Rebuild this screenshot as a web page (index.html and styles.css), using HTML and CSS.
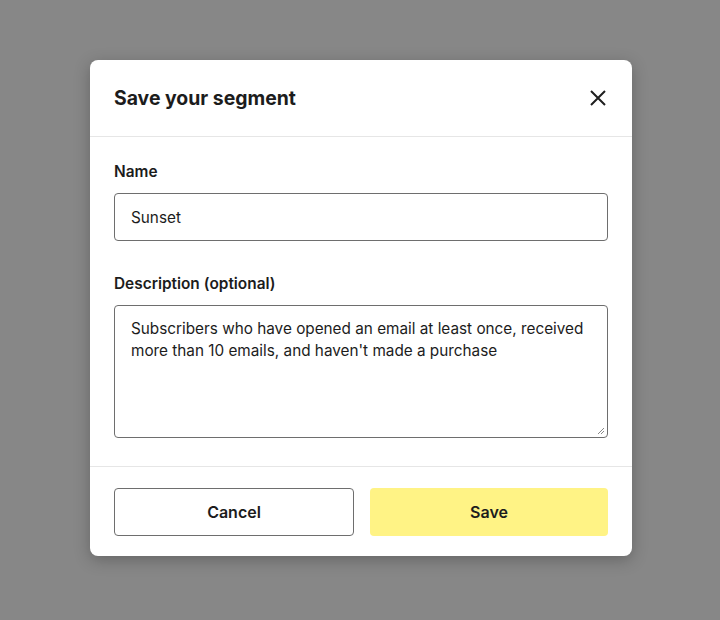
FILE: index.html
```html
<!DOCTYPE html>
<html>
<head>
<meta charset="utf-8">
<link rel="stylesheet" href="styles.css">
</head>
<body>
<div class="modal">
  <div class="modal-header">
    <h2 class="title">Save your segment</h2>
    <button class="close" aria-label="Close">
      <svg width="18" height="18" viewBox="0 0 18 18"><path d="M2 2 L16 16 M16 2 L2 16" stroke="#1f1f1f" stroke-width="2" fill="none"/></svg>
    </button>
  </div>
  <div class="modal-body">
    <label class="label">Name</label>
    <div class="input">Sunset</div>
    <label class="label label-desc">Description<span class="opt">(optional)</span></label>
    <div class="textarea">Subscribers who have opened an email at least once, received more than 10 emails, and haven't made a purchase
      <svg class="grip" width="8" height="8" viewBox="0 0 8 8"><path d="M7 1 L1 7 M7 4 L4 7" stroke="#888" stroke-width="1"/></svg>
    </div>
  </div>
  <div class="modal-footer">
    <button class="btn btn-cancel">Cancel</button>
    <button class="btn btn-save">Save</button>
  </div>
</div>
</body>
</html>
```
FILE: styles.css
```css
* { box-sizing: border-box; }
html, body { margin: 0; padding: 0; }
body {
  width: 720px;
  height: 620px;
  background: #878787;
  display: flex;
  align-items: center;
  justify-content: center;
  font-family: "Inter", "Noto Sans", sans-serif;
  color: #1c1c1c;
}
.modal {
  width: 542px;
  height: 496px;
  background: #fff;
  border-radius: 8px;
  box-shadow: 0 4px 16px rgba(0,0,0,0.25);
  display: flex;
  flex-direction: column;
  margin-top: -4px;
  margin-left: 2px;
}
.modal-header {
  height: 77px;
  border-bottom: 1px solid #e6e6e6;
  display: flex;
  align-items: center;
  justify-content: space-between;
  padding: 0 24px;
}
.title {
  margin: 0;
  font-size: 19.4px;
  font-weight: 700;
}
.close {
  border: 0;
  background: none;
  padding: 0;
  width: 18px;
  height: 18px;
  display: flex;
  margin-right: 1px;
}
.modal-body {
  padding: 25px 24px 0;
  height: 330px;
  border-bottom: 1px solid #e6e6e6;
  display: flex;
  flex-direction: column;
}
.label {
  font-size: 15.4px;
  font-weight: 600;
  line-height: 20px;
  margin-bottom: 11px;
}
.opt { margin-left: 4px; }
.label-desc { margin-top: 33px; }
.input {
  height: 48px;
  border: 1px solid #6e6e6e;
  border-radius: 4px;
  padding: 0 16px;
  display: flex;
  align-items: center;
  font-size: 15.3px;
}
.textarea {
  position: relative;
  height: 133px;
  border: 1px solid #6e6e6e;
  border-radius: 4px;
  padding: 12px 16px;
  font-size: 15.3px;
  line-height: 22px;
}
.grip { position: absolute; right: 2px; bottom: 2px; }
.modal-footer {
  flex: 1;
  display: flex;
  align-items: center;
  gap: 16px;
  padding: 0 24px;
}
.btn {
  flex: 1;
  height: 48px;
  border-radius: 4px;
  font-family: inherit;
  font-size: 16px;
  font-weight: 600;
  color: #1c1c1c;
}
.btn-cancel { background: #fff; border: 1px solid #6e6e6e; }
.btn-save { background: #fff385; border: 0; }
```
